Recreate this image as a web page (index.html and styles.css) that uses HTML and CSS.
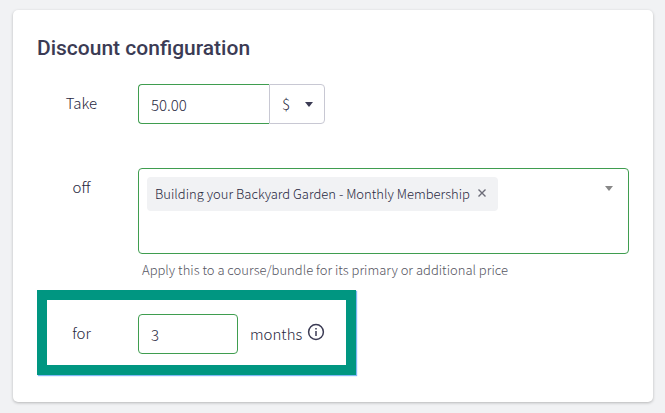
FILE: index.html
```html
<!DOCTYPE html>
<html lang="en">
  <head>
    <meta charset="UTF-8" />
    <meta name="viewport" content="width=device-width, initial-scale=1.0" />
    <title>Discount configuration</title>
    <link rel="stylesheet" href="styles.css">
  </head>
  <body>
    <main class="card">
      <h2>Discount configuration</h2>

      <form>
        <div class="row amount-row">
          <label class="row-label" for="amount">Take</label>
          <div class="input-group">
            <input class="field amount" id="amount" type="text" value="50.00" />
            <div class="unit">
              <select class="field" aria-label="Discount unit">
                <option>$</option>
                <option>%</option>
              </select>
              <svg class="arrow" width="8" height="5" viewBox="0 0 8 5"><path d="M0 0h8L4 5z" /></svg>
            </div>
          </div>
        </div>

        <div class="row">
          <label class="row-label" for="product">off</label>
          <div class="row-content">
            <div class="tokens">
              <span class="token">
                Building your Backyard Garden - Monthly Membership
                <button class="remove" type="button" aria-label="Remove">
                  <svg width="8" height="8" viewBox="0 0 8 8"><path d="M0.5 0.5l7 7M7.5 0.5l-7 7" /></svg>
                </button>
              </span>
              <button class="open" id="product" type="button" aria-label="Open list">
                <svg width="8" height="5" viewBox="0 0 8 5"><path d="M0 0h8L4 5z" /></svg>
              </button>
            </div>
            <p class="help">Apply this to a course/bundle for its primary or additional price</p>
          </div>
        </div>

        <div class="row highlight">
          <label class="row-label" for="months">for</label>
          <input class="field months" id="months" type="text" value="3" />
          <span class="suffix">months</span>
          <svg class="info" width="18" height="18" viewBox="0 0 18 18">
            <circle cx="9" cy="9" r="7.4" />
            <path d="M9 8v5M9 5v1.5" />
          </svg>
        </div>
      </form>
    </main>
  </body>
</html>
```

FILE: styles.css
```css
* {
  box-sizing: border-box;
  margin: 0;
  padding: 0;
}

body {
  background-color: #f1f2f4;
  color: #28283e;
  font-family: "Noto Sans CJK SC", "Noto Sans", sans-serif;
  font-size: 15px;
  font-weight: 300;
  line-height: 20px;
  padding: 10px 12px;
}

.card {
  background: white;
  border-radius: 5px;
  box-shadow: 0 1px 3px rgba(0, 0, 0, 0.25);
  margin-left: 1px;
  padding: 24px 24px 27px;
}

h2 {
  color: #3b3b54;
  font-family: Roboto, sans-serif;
  font-size: 21px;
  font-weight: 500;
  line-height: 28px;
  margin-bottom: 22px;
}

.row {
  display: flex;
}

.amount-row {
  margin-bottom: 44px;
}

.row-label {
  flex: none;
  width: 89px;
  margin-right: 12px;
  line-height: 38px;
  text-align: center;
}

.row-content {
  flex: 1;
}

.field {
  height: 40px;
  border: 1px solid #3f9d4f;
  border-radius: 4px;
  background: white;
  color: inherit;
  font: inherit;
  padding: 0 12px;
}

.input-group {
  display: flex;
}

.amount {
  width: 131px;
  border-right: none;
  border-radius: 4px 0 0 4px;
}

.unit {
  position: relative;
}

.unit .field {
  appearance: none;
  width: 56px;
  border-color: #c8c8d3;
  border-radius: 0 4px 4px 0;
}

.arrow {
  position: absolute;
  top: 18px;
  right: 12px;
  fill: #3b3b54;
  pointer-events: none;
}

.tokens {
  display: flex;
  justify-content: space-between;
  align-items: flex-start;
  min-height: 86px;
  border: 1px solid #3f9d4f;
  border-radius: 4px;
  padding: 8px;
}

.token {
  display: flex;
  align-items: center;
  gap: 8px;
  background: #f1f2f4;
  border-radius: 4px;
  font-size: 13px;
  line-height: 34px;
  padding: 0 12px 0 8px;
}

.remove,
.open {
  display: flex;
  border: none;
  background: none;
  cursor: pointer;
}

.remove {
  padding-bottom: 2px;
}

.remove path {
  stroke: #6c6c78;
  stroke-width: 1.4;
}

.open {
  padding: 9px 7px;
  fill: #888888;
}

.help {
  color: #55555f;
  font-size: 13px;
  padding: 6px 4px 0;
}

.highlight {
  width: 319px;
  margin-top: 10px;
  padding: 24px 0 21px;
  outline: 10px solid #009681;
  outline-offset: -10px;
  box-shadow: 1px 1px 1px #7db8f5;
}

.months {
  width: 100px;
}

.suffix {
  line-height: 40px;
  margin: 0 5px 0 12px;
}

.info {
  margin-top: 9px;
  fill: none;
  stroke: #3b3b54;
  stroke-width: 1.5;
}
```
